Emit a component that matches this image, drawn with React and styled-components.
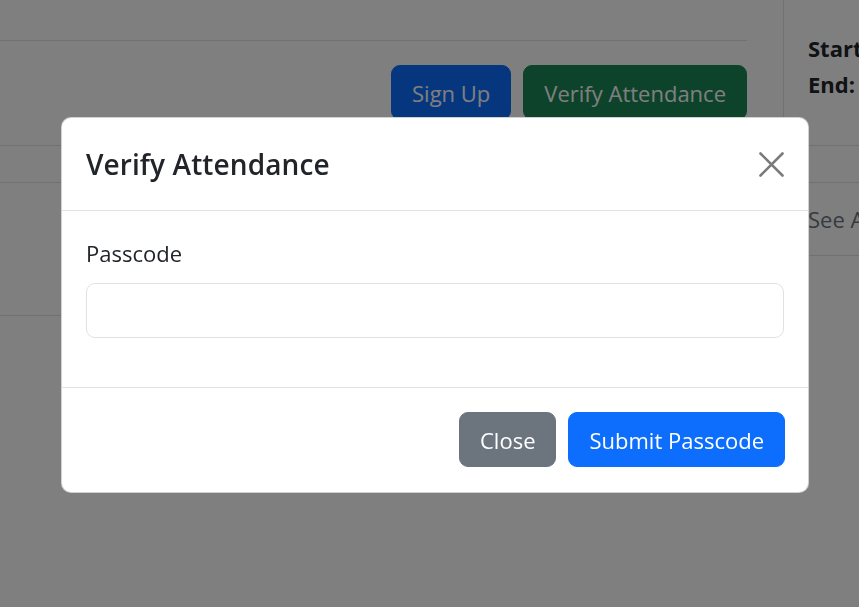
import React from 'react';
import styled, { createGlobalStyle } from 'styled-components';

const GlobalStyle = createGlobalStyle`
  html, body {
    margin: 0;
    padding: 0;
    background: #fff;
    overflow: hidden;
  }
  body {
    font-family: 'Open Sans', 'Noto Sans', sans-serif;
    font-size: 22px;
    color: #212529;
  }
  * {
    box-sizing: border-box;
  }
`;

const Page = styled.div`
  width: 859px;
  height: 607px;
`;

const Row = styled.div`
  display: flex;
`;

const LeftCol = styled.div`
  width: 783px;
  flex-shrink: 0;
  height: ${(p) => p.$height}px;
  border-bottom: ${(p) => (p.$lined ? '1px solid #dee2e6' : 'none')};
`;

const RightCol = styled.div`
  flex: 1;
  min-width: 0;
  overflow: hidden;
  border-left: 1px solid #dee2e6;
  white-space: nowrap;
`;

const TopRule = styled.div`
  width: 747px;
  height: 41px;
  border-bottom: 1px solid #dee2e6;
`;

const ActionRow = styled.div`
  display: flex;
  justify-content: flex-end;
  gap: 12px;
  width: 747px;
  padding-top: 24px;
`;

const Button = styled.button`
  font-family: inherit;
  font-size: 22px;
  line-height: 36px;
  height: 55px;
  padding: 0 20px;
  border: 1px solid ${(p) => p.$bg};
  border-radius: 9px;
  background: ${(p) => p.$bg};
  color: #fff;
  cursor: pointer;
`;

const TimeBlock = styled.div`
  padding: 30px 0 0 24px;
  line-height: 36px;
  font-size: 22px;
`;

const Strong = styled.span`
  font-weight: 700;
`;

const Band = styled.div`
  height: 38px;
  border-top: 1px solid #dee2e6;
  border-bottom: 1px solid #dee2e6;
`;

const SeeAll = styled.div`
  height: 73px;
  padding-left: 24px;
  display: flex;
  align-items: center;
  color: #6c757d;
  border-bottom: 1px solid #dee2e6;
`;

const Backdrop = styled.div`
  position: fixed;
  inset: 0;
  background: rgba(0, 0, 0, 0.5);
  padding: 117px 0 0 61px;
`;

const Dialog = styled.div`
  width: 748px;
  background: #fff;
  border: 1px solid rgba(0, 0, 0, 0.18);
  border-radius: 10px;
  overflow: hidden;
`;

const Header = styled.div`
  display: flex;
  align-items: center;
  justify-content: space-between;
  height: 93px;
  padding: 0 23px 0 24px;
  border-bottom: 1px solid #dee2e6;
`;

const Title = styled.h5`
  margin: 0;
  font-size: 28px;
  font-weight: 600;
  letter-spacing: 0.1px;
  line-height: 44px;
  color: #212529;
`;

const CloseX = styled.button`
  width: 27px;
  height: 27px;
  padding: 0;
  border: none;
  background: transparent;
  display: flex;
  align-items: center;
  justify-content: center;
  cursor: pointer;
`;

const Body = styled.div`
  padding: 24px 24px 25px 24px;
`;

const Label = styled.label`
  display: block;
  line-height: 36px;
  margin-bottom: 12px;
  color: #212529;
`;

const Input = styled.input`
  display: block;
  width: 100%;
  height: 55px;
  margin-bottom: 24px;
  border: 1px solid #dee2e6;
  border-radius: 9px;
  font-family: inherit;
  font-size: 22px;
  padding: 0 18px;
  outline: none;
`;

const Footer = styled.div`
  display: flex;
  justify-content: flex-end;
  gap: 12px;
  padding: 24px 23px 25px 24px;
  border-top: 1px solid #dee2e6;
`;

export default function App() {
  return (
    <>
      <GlobalStyle />
      <Page>
        <Row>
          <LeftCol $height={145}>
            <TopRule />
            <ActionRow>
              <Button $bg="#0d6efd">Sign Up</Button>
              <Button $bg="#198754">Verify Attendance</Button>
            </ActionRow>
          </LeftCol>
          <RightCol>
            <TimeBlock>
              <div>
                <Strong>Start:</Strong> 10:00 AM
              </div>
              <div>
                <Strong>End:</Strong> 11:30 AM
              </div>
            </TimeBlock>
          </RightCol>
        </Row>
        <Band />
        <Row>
          <LeftCol $height={133} $lined />
          <RightCol>
            <SeeAll>See Attendees</SeeAll>
          </RightCol>
        </Row>
      </Page>
      <Backdrop>
        <Dialog>
          <Header>
            <Title>Verify Attendance</Title>
            <CloseX aria-label="Close">
              <svg width="25" height="25" viewBox="0 0 25 25">
                <path d="M1.5 1.5 L23.5 23.5 M23.5 1.5 L1.5 23.5" stroke="#7b7b7b" strokeWidth="2.6" strokeLinecap="round" />
              </svg>
            </CloseX>
          </Header>
          <Body>
            <Label htmlFor="passcode">Passcode</Label>
            <Input id="passcode" type="text" />
          </Body>
          <Footer>
            <Button $bg="#6c757d">Close</Button>
            <Button $bg="#0d6efd">Submit Passcode</Button>
          </Footer>
        </Dialog>
      </Backdrop>
    </>
  );
}
